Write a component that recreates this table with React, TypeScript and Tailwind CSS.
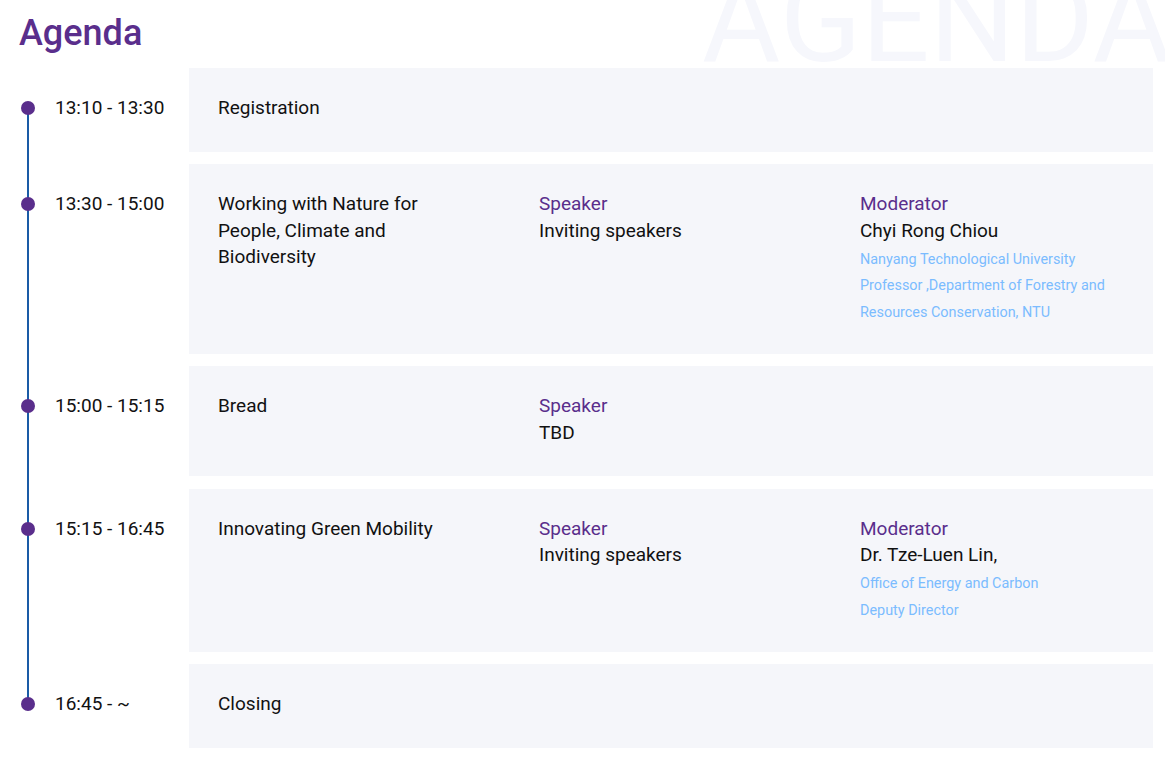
const items = [
  { time: "13:10 - 13:30", title: "Registration" },
  {
    time: "13:30 - 15:00",
    title: "Working with Nature for People, Climate and Biodiversity",
    speaker: "Inviting speakers",
    moderator: {
      name: "Chyi Rong Chiou",
      lines: ["Nanyang Technological University", "Professor ,Department of Forestry and Resources Conservation, NTU"],
    },
  },
  { time: "15:00 - 15:15", title: "Bread", speaker: "TBD" },
  {
    time: "15:15 - 16:45",
    title: "Innovating Green Mobility",
    speaker: "Inviting speakers",
    moderator: {
      name: "Dr. Tze-Luen Lin,",
      lines: ["Office of Energy and Carbon", "Deputy Director"],
    },
  },
  { time: "16:45 - ~", title: "Closing" },
];

export default function App() {
  return (
    <div className="relative w-[1165px] min-h-[760px] overflow-hidden bg-white font-['Roboto',sans-serif] text-[#111]">
      <div className="pointer-events-none absolute left-[702px] top-[-40px] select-none whitespace-nowrap text-[120px] leading-none text-[#f6f7fc]">
        AGENDA
      </div>

      <div className="relative pl-[19px] pr-[12px] pt-[15px]">
        <h1 className="text-[36px] font-medium leading-none text-[#5a2e8c]">Agenda</h1>

        <div className="relative mt-[17px] flex flex-col gap-[12.5px]">
          <div className="absolute left-[8px] top-[40px] bottom-[43px] w-[2px] bg-[#1a5ba6]" />
          {items.map((it) => (
            <div key={it.time} className="flex">
              <div className="flex w-[170px] shrink-0 items-start gap-[20px] pl-[2px] pt-[27px]">
                <div className="flex h-[26.5px] items-center">
                  <span className="relative h-[14px] w-[14px] rounded-full bg-[#5a2e8c]" />
                </div>
                <span className="text-[19px] leading-[26.5px]">{it.time}</span>
              </div>
              <div className="grid flex-1 grid-cols-3 gap-x-[57px] bg-[#f5f6fa] px-[29px] pt-[27px] pb-[30px] text-[19px] leading-[26.5px]">
                <div>{it.title}</div>
                <div>
                  {it.speaker && (
                    <>
                      <div className="text-[#5a2e8c]">Speaker</div>
                      <div>{it.speaker}</div>
                    </>
                  )}
                </div>
                <div>
                  {it.moderator && (
                    <>
                      <div className="text-[#5a2e8c]">Moderator</div>
                      <div>{it.moderator.name}</div>
                      <div className="mb-[-2.5px] pt-[2.5px]">
                        {it.moderator.lines.map((l) => (
                          <div key={l} className="text-[14.4px] leading-[26.5px] text-[#7bbcff]">
                            {l}
                          </div>
                        ))}
                      </div>
                    </>
                  )}
                </div>
              </div>
            </div>
          ))}
        </div>
      </div>
    </div>
  );
}
